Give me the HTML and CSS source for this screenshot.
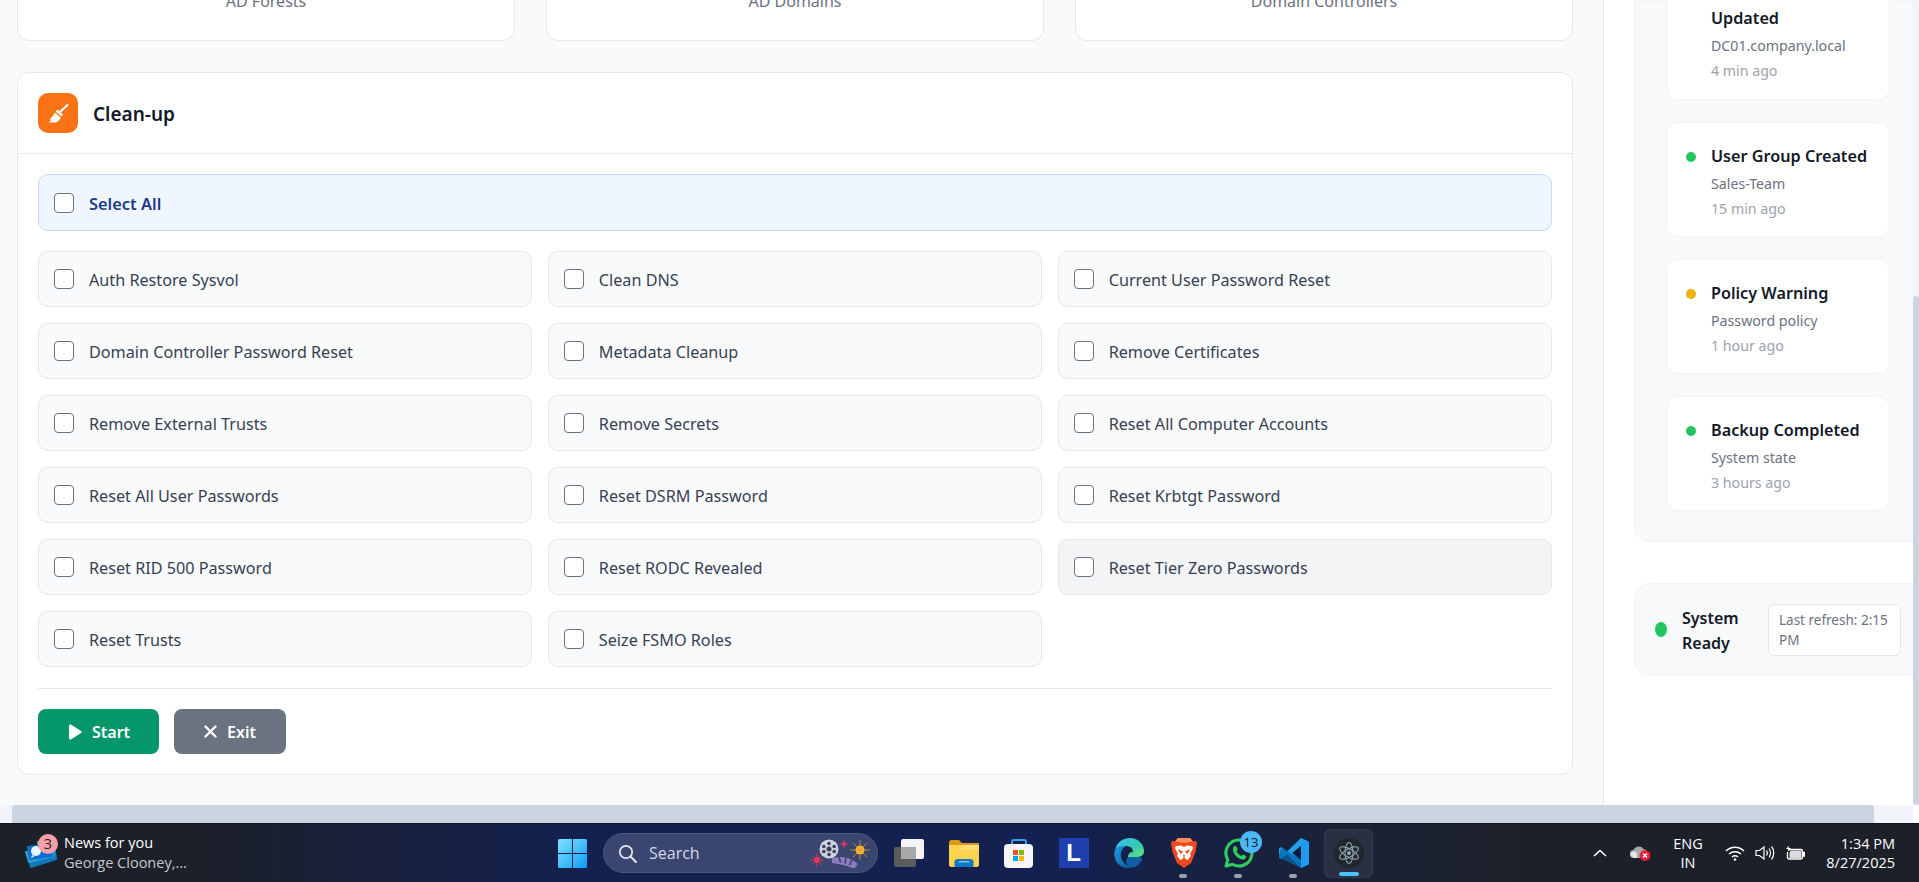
FILE: index.html
```html
<!DOCTYPE html>
<html lang="en">

<head>
    <meta charset="UTF-8">
    <title>AD Recovery</title>
    <link rel="stylesheet" href="styles.css">
</head>

<body>

    <section class="window">

        <div class="viewport">

            <main class="main">

                <div class="stats">
                    <div class="stat-card">AD Forests</div>
                    <div class="stat-card">AD Domains</div>
                    <div class="stat-card">Domain Controllers</div>
                </div>

                <div class="panel">

                    <div class="panel-head">
                        <span class="panel-icon">
                            <svg viewBox="0 0 21 19" width="21" height="19">
                                <path d="M12.5 7.5L19.5 1" stroke="#fff" stroke-width="2.2" stroke-linecap="round" fill="none"/>
                                <path d="M9.5 5.5L15 10.5L13.5 12.5L7.5 7.5Z" fill="#fff"/>
                                <path d="M6.8 8.5L12.8 13.4C11.5 16.5 9.5 18.2 7.5 18.5L0.5 18.5C2.5 17.5 3 16.5 3 15.5L1.2 15.3C3.5 14 5.5 11.5 6.8 8.5Z" fill="#fff"/>
                            </svg>
                        </span>
                        <h2 class="panel-title">Clean-up</h2>
                    </div>

                    <div class="panel-body">

                        <label class="option option-all"><input type="checkbox"><span>Select All</span></label>

                        <div class="option-grid">
                            <label class="option"><input type="checkbox"><span>Auth Restore Sysvol</span></label>
                            <label class="option"><input type="checkbox"><span>Clean DNS</span></label>
                            <label class="option"><input type="checkbox"><span>Current User Password Reset</span></label>
                            <label class="option"><input type="checkbox"><span>Domain Controller Password Reset</span></label>
                            <label class="option"><input type="checkbox"><span>Metadata Cleanup</span></label>
                            <label class="option"><input type="checkbox"><span>Remove Certificates</span></label>
                            <label class="option"><input type="checkbox"><span>Remove External Trusts</span></label>
                            <label class="option"><input type="checkbox"><span>Remove Secrets</span></label>
                            <label class="option"><input type="checkbox"><span>Reset All Computer Accounts</span></label>
                            <label class="option"><input type="checkbox"><span>Reset All User Passwords</span></label>
                            <label class="option"><input type="checkbox"><span>Reset DSRM Password</span></label>
                            <label class="option"><input type="checkbox"><span>Reset Krbtgt Password</span></label>
                            <label class="option"><input type="checkbox"><span>Reset RID 500 Password</span></label>
                            <label class="option"><input type="checkbox"><span>Reset RODC Revealed</span></label>
                            <label class="option option-hover"><input type="checkbox"><span>Reset Tier Zero Passwords</span></label>
                            <label class="option"><input type="checkbox"><span>Reset Trusts</span></label>
                            <label class="option"><input type="checkbox"><span>Seize FSMO Roles</span></label>
                        </div>

                        <div class="actions">
                            <button class="btn btn-start">
                                <svg viewBox="0 0 14 16" width="14" height="16"><path d="M1 1.6C1 .6 2 .1 2.8.6L13 6.9C13.8 7.4 13.8 8.6 13 9.1L2.8 15.4C2 15.9 1 15.4 1 14.4Z" fill="#fff"/></svg>
                                Start
                            </button>
                            <button class="btn btn-exit">
                                <svg viewBox="0 0 13 13" width="13" height="13"><path d="M1.5 1.5L11.5 11.5M11.5 1.5L1.5 11.5" stroke="#fff" stroke-width="2.4" stroke-linecap="round"/></svg>
                                Exit
                            </button>
                        </div>

                    </div>

                </div>

            </main>

            <aside class="sidebar">

                <div class="activity">
                    <div class="activity-card activity-first">
                        <div class="activity-title">Updated</div>
                        <div class="activity-sub">DC01.company.local</div>
                        <div class="activity-time">4 min ago</div>
                    </div>
                    <div class="activity-card">
                        <i class="dot dot-green"></i>
                        <div class="activity-title">User Group Created</div>
                        <div class="activity-sub">Sales-Team</div>
                        <div class="activity-time">15 min ago</div>
                    </div>
                    <div class="activity-card">
                        <i class="dot dot-amber"></i>
                        <div class="activity-title">Policy Warning</div>
                        <div class="activity-sub">Password policy</div>
                        <div class="activity-time">1 hour ago</div>
                    </div>
                    <div class="activity-card">
                        <i class="dot dot-green"></i>
                        <div class="activity-title">Backup Completed</div>
                        <div class="activity-sub">System state</div>
                        <div class="activity-time">3 hours ago</div>
                    </div>
                </div>

                <div class="status">
                    <i class="status-dot"></i>
                    <strong class="status-text">System Ready</strong>
                    <span class="status-refresh">Last refresh: 2:15 PM</span>
                </div>

            </aside>

            <div class="vscroll"><div class="vscroll-thumb"></div></div>

        </div>

        <div class="hscroll">
            <div class="hscroll-track"><div class="hscroll-thumb"></div></div>
            <div class="hscroll-corner"></div>
        </div>

    </section>

    <footer class="taskbar">

        <div class="news">
            <span class="news-icon">
                <svg viewBox="0 0 34 32" width="34" height="32" stroke-linejoin="round">
                    <path d="M12 4h14v8H12z" fill="#4caf72"/>
                    <path d="M3 20L30 14L31 22L6 30Z" fill="#1477b8" stroke="#1477b8" stroke-width="2"/>
                    <path d="M1 15L28 10L29 19L4 25Z" fill="#2a9fd8" stroke="#2a9fd8" stroke-width="2"/>
                    <path d="M3 10L26 7L27 19L5 22Z" fill="#0f6fd0" stroke="#0f6fd0" stroke-width="2"/>
                    <circle cx="11" cy="14" r="5" fill="#e8f3fb"/>
                    <path d="M7 18l-1 3 4-2z" fill="#e8f3fb"/>
                    <path d="M18 11.5h7M18 15h7" stroke="#cfe8f8" stroke-width="1.6"/>
                </svg>
                <b class="news-badge">3</b>
            </span>
            <div class="news-text">
                <div>News for you</div>
                <div class="news-sub">George Clooney,...</div>
            </div>
        </div>

        <div class="task-center">

            <span class="slot">
                <svg viewBox="0 0 29 29" width="29" height="29">
                    <defs>
                        <linearGradient id="winGrad" x1="0" y1="0" x2="1" y2="1">
                            <stop offset="0" stop-color="#7fe3ff"/>
                            <stop offset="1" stop-color="#0f9bf5"/>
                        </linearGradient>
                    </defs>
                    <path d="M1.5 0H14V14H0V1.5A1.5 1.5 0 0 1 1.5 0ZM15 0H27.5A1.5 1.5 0 0 1 29 1.5V14H15ZM0 15H14V29H1.5A1.5 1.5 0 0 1 0 27.5ZM15 15H29V27.5A1.5 1.5 0 0 1 27.5 29H15Z" fill="url(#winGrad)"/>
                </svg>
            </span>

            <div class="search">
                <svg viewBox="0 0 19 19" width="19" height="19"><circle cx="8" cy="8" r="6.2" stroke="#e4e7f0" stroke-width="1.7" fill="none"/><path d="M12.5 12.5L18 18" stroke="#e4e7f0" stroke-width="1.9" stroke-linecap="round"/></svg>
                <span>Search</span>
                <svg class="search-art" viewBox="0 0 62 30" width="62" height="30">
                    <path d="M24 20C31 18 41 18 50 26L46 31C39 27 31 26 24 25Z" fill="#8a7bc0"/>
                    <path d="M31 18.5l1.5 6M38 19.5l-1 6M44 22l-2.5 5" stroke="#3c3f5c" stroke-width="1.5"/>
                    <circle cx="21" cy="11" r="9.5" fill="#cfd0e0"/>
                    <circle cx="21" cy="11" r="2.5" fill="#3c3f5c"/>
                    <circle cx="21" cy="5.5" r="1.8" fill="#3c3f5c"/><circle cx="21" cy="16.5" r="1.8" fill="#3c3f5c"/>
                    <circle cx="15.8" cy="8.5" r="1.8" fill="#3c3f5c"/><circle cx="26.2" cy="8.5" r="1.8" fill="#3c3f5c"/>
                    <circle cx="15.8" cy="13.5" r="1.8" fill="#3c3f5c"/><circle cx="26.2" cy="13.5" r="1.8" fill="#3c3f5c"/>
                    <circle cx="9" cy="22" r="3" fill="#e8365a"/>
                    <path d="M9 15v14M2 22h14M4 17l10 10M14 17L4 27" stroke="#e8365a" stroke-width=".8"/>
                    <circle cx="36" cy="6" r="2.2" fill="#e8365a"/>
                    <path d="M36 2v8M32 6h8" stroke="#e8365a" stroke-width=".7"/>
                    <circle cx="52" cy="12" r="4.5" fill="#ffb81c"/>
                    <path d="M52 2v20M42 12h20M45 5l14 14M59 5L45 19" stroke="#d99a3a" stroke-width=".8"/>
                </svg>
            </div>

            <span class="slot">
                <svg viewBox="0 0 30 28" width="30" height="28">
                    <rect x="7" y="0" width="23" height="20" rx="2" fill="#f4f4f4"/>
                    <rect x="0" y="8" width="22" height="20" rx="2" fill="#5c5c5c"/>
                    <rect x="7" y="8" width="15" height="12" fill="#a8a8a8"/>
                </svg>
            </span>

            <span class="slot">
                <svg viewBox="0 0 30 27" width="30" height="27">
                    <path d="M0 2.5C0 1 1 0 2.5 0H10L13 3H30V10H0Z" fill="#d99a14"/>
                    <path d="M0 5H30V25C30 26 29 27 28 27H2C1 27 0 26 0 25Z" fill="#ffd24d"/>
                    <path d="M14 5H30V10H9Z" fill="#ffdf73"/>
                    <path d="M5.5 22C5.5 20 7 19 9 19H21C23 19 24.5 20 24.5 22V27H5.5Z" fill="#0f78c4"/>
                    <rect x="10" y="21" width="10" height="1.5" fill="#7cc4ef"/>
                </svg>
            </span>

            <span class="slot">
                <svg viewBox="0 0 30 29" width="30" height="29">
                    <path d="M8 8V3C8 2 9 1 10 1H20C21 1 22 2 22 3V8" stroke="#29a9ea" stroke-width="2" fill="none"/>
                    <rect x="0" y="5" width="29" height="24" rx="4" fill="#f6f6f6"/>
                    <rect x="9" y="11" width="5" height="5" fill="#f25022"/>
                    <rect x="15" y="11" width="5" height="5" fill="#7fba00"/>
                    <rect x="9" y="17" width="5" height="5" fill="#00a4ef"/>
                    <rect x="15" y="17" width="5" height="5" fill="#ffb900"/>
                </svg>
            </span>

            <span class="slot">
                <span class="app-l"><span>L</span></span>
            </span>

            <span class="slot">
                <svg viewBox="0 0 30 30" width="30" height="30">
                    <defs>
                        <linearGradient id="edgeA" x1="0" y1="0" x2="1" y2="1">
                            <stop offset="0" stop-color="#35c1f1"/>
                            <stop offset=".6" stop-color="#36c9b0"/>
                            <stop offset="1" stop-color="#66eb6e"/>
                        </linearGradient>
                        <linearGradient id="edgeB" x1="0" y1="0" x2="1" y2="1">
                            <stop offset="0" stop-color="#1b9de2"/>
                            <stop offset="1" stop-color="#0c59a4"/>
                        </linearGradient>
                    </defs>
                    <path d="M1 12C3 4 9 0 16 0C24 0 30 6 30 13C30 17 27 19 22 19H14C14 16 16 14 19 14C19 10 16 8 12 8C7 8 3 9 1 12Z" fill="url(#edgeA)"/>
                    <path d="M1 12C3 8 7 7 12 8C8 10 6 14 7 19C8 25 14 29 19 29C12 32 3 28 1 20C0 17 0 15 1 12Z" fill="url(#edgeB)"/>
                    <path d="M14 19H22C24 19 27 18 28 20C26 26 22 30 17 29C13 28 10 23 14 19Z" fill="#125fa8"/>
                    <path d="M28.5 21C27 26 23 29 19 29.5C22 28 25 25 27 21Z" fill="#0f4e94"/>
                </svg>
            </span>

            <span class="slot">
                <svg viewBox="0 0 26 30" width="26" height="30">
                    <path d="M7 0H19L22 3.5L25 3L26 5L24.5 14L20 25L13 30L6 25L1.5 14L0 5L1 3L4 3.5Z" fill="#f1471d"/>
                    <path d="M7 0H19L22 3.5L13 5L4 3.5Z" fill="#ff8c5a"/>
                    <path d="M5 8L10 7.5L13 9L16 7.5L21 8L22 10L19 16L20 18L16.5 22L13 20L9.5 22L6 18L7 16L4 10Z" fill="#fff"/>
                    <path d="M8 12.5L11 13.5L10 15ZM18 12.5L15 13.5L16 15ZM13 16.5V21" stroke="#f1471d" stroke-width="1.2" fill="#f1471d"/>
                </svg>
                <i class="run-dot"></i>
            </span>

            <span class="slot">
                <svg viewBox="0 0 30 30" width="30" height="30">
                    <path d="M15 2A13 13 0 1 1 8.5 26.3L2 28L3.8 21.7A13 13 0 0 1 15 2Z" fill="none" stroke="#2fd05f" stroke-width="3" stroke-linejoin="round"/>
                    <path d="M10.5 8C9 9 8.5 11 9.5 14C11 18 14 20.5 18 21.5C20 22 21.5 21 22 19.5L22 18L19 16.5L17.5 18C15.5 17.5 13 15 12.5 13L13.8 11.5L12.3 8.2Z" fill="#2fd05f"/>
                </svg>
                <b class="app-badge">13</b>
                <i class="run-dot"></i>
            </span>

            <span class="slot">
                <svg viewBox="0 0 30 30" width="30" height="30">
                    <path d="M22 0L30 4V26L22 30L8 16.5L2.5 21L0 19.5V10.5L2.5 9L8 13.5ZM22 8L13.5 15L22 22Z" fill="#24a0ed"/>
                    <path d="M22 0L30 4V26L22 30Z" fill="#1f9cf0"/>
                    <path d="M2.5 9L22 22V30L0 19.5V17Z" fill="#0065a9" opacity=".75"/>
                    <path d="M22 8L13.5 15L22 22Z" fill="#141c3c"/>
                </svg>
                <i class="run-dot"></i>
            </span>

            <span class="slot slot-active">
                <span class="app-electron">
                    <svg viewBox="0 0 24 24" width="24" height="24" fill="none" stroke="#8fa3ad" stroke-width="1.1">
                        <ellipse cx="12" cy="12" rx="10.5" ry="4" transform="rotate(30 12 12)"/>
                        <ellipse cx="12" cy="12" rx="10.5" ry="4" transform="rotate(-30 12 12)"/>
                        <ellipse cx="12" cy="12" rx="10.5" ry="4" transform="rotate(90 12 12)"/>
                        <circle cx="12" cy="12" r="1.5" fill="#8fa3ad"/>
                    </svg>
                </span>
                <i class="run-bar"></i>
            </span>

        </div>

        <div class="tray">

            <svg class="tray-chevron" viewBox="0 0 14 8" width="14" height="8"><path d="M1 7L7 1.5L13 7" stroke="#fff" stroke-width="1.6" fill="none"/></svg>

            <span class="tray-cloud">
                <svg viewBox="0 0 21 16" width="21" height="16">
                    <path d="M4 13A4 4 0 0 1 3.5 5C5 1 11 0 13.5 4C15.5 4 17 5.5 17 7V13Z" fill="#a8a8a8"/>
                    <path d="M1 11A3 3 0 0 1 4 6.5C6 6.5 7.5 8.5 7 13H4Z" fill="#e6e6e6"/>
                    <circle cx="15" cy="10.5" r="5.4" fill="#e81e3c"/>
                    <path d="M13 8.5L17 12.5M17 8.5L13 12.5" stroke="#fff" stroke-width="1.4"/>
                </svg>
            </span>

            <div class="tray-lang">ENG<br>IN</div>

            <div class="tray-icons">
                <svg viewBox="0 0 20 16" width="20" height="16" fill="none" stroke="#fff" stroke-width="1.5">
                    <path d="M1 6C6 1 14 1 19 6M4 9C7.5 6 12.5 6 16 9M7 12C8.7 10.7 11.3 10.7 13 12"/>
                    <circle cx="10" cy="14.5" r="1.3" fill="#fff" stroke="none"/>
                </svg>
                <svg viewBox="0 0 20 16" width="20" height="16" fill="none" stroke="#fff" stroke-width="1.2">
                    <path d="M1 5.5H4.5L9 2V14L4.5 10.5H1Z"/>
                    <path d="M11.5 5.5C12.5 7 12.5 9 11.5 10.5M14 3.5C16 6 16 10 14 12.5M16.5 1.5C19.5 5 19.5 11 16.5 14.5"/>
                </svg>
                <svg viewBox="0 0 20 16" width="20" height="16" fill="none" stroke="#fff" stroke-width="1.3">
                    <path d="M3 4.5H16C17 4.5 17.5 5 17.5 6V12.5C17.5 13.500 17 14 16 14H4C3 14 2.5 13.5 2.5 12.5V7"/>
                    <path d="M18 7.5H19.5V11H18" fill="#fff"/>
                    <path d="M5.5 5.5H16.5V13H4.5V8Z" fill="#dcdcdc" stroke="none"/>
                    <path d="M4 0.5L1 4H3.5L2.5 7L6 3H3.5Z" fill="#fff" stroke="none"/>
                </svg>
            </div>

            <div class="tray-clock">1:34 PM<br>8/27/2025</div>

        </div>

    </footer>

</body>

</html>
```

FILE: styles.css
```css
* {
    box-sizing: border-box;
}

html, body {
    height: 100%;
}

body {
    margin: 0;
    overflow: hidden;
    font-family: "Noto Sans", "Liberation Sans", sans-serif;
    font-size: 16px;
    color: #111827;
    background: #fff;
}

.window {
    height: 823px;
    display: flex;
    flex-direction: column;
}

.viewport {
    height: 805px;
    display: flex;
    overflow: hidden;
}

/* main column */

.main {
    width: 1604px;
    flex: none;
    height: 805px;
    padding: 0 30px 0 17px;
    background: #f8fafc;
    border-right: 1px solid #e5e7eb;
    overflow: hidden;
}

.stats {
    display: grid;
    grid-template-columns: repeat(3, 1fr);
    gap: 31px;
    margin-top: -60px;
}

.stat-card {
    height: 101px;
    padding-top: 49px;
    text-align: center;
    color: #6b7280;
    background: #fff;
    border: 1px solid #e5e7eb;
    border-radius: 12px;
}

.panel {
    margin-top: 31px;
    height: 703px;
    background: #fff;
    border: 1px solid #e5e7eb;
    border-radius: 12px;
}

.panel-head {
    display: flex;
    align-items: center;
    gap: 15px;
    height: 81px;
    padding: 0 20px;
    border-bottom: 1px solid #e5e7eb;
}

.panel-icon {
    width: 40px;
    height: 40px;
    display: flex;
    align-items: center;
    justify-content: center;
    background: #f97316;
    border-radius: 10px;
}

.panel-title {
    margin: 2px 0 0;
    font-size: 19px;
    font-weight: 600;
}

.panel-body {
    padding: 20px;
}

.option {
    display: flex;
    align-items: center;
    gap: 15px;
    height: 56px;
    padding: 0 15px;
    font-size: 16.2px;
    color: #374151;
    background: #f9fafb;
    border: 1px solid #e5e7eb;
    border-radius: 10px;
}

.option span {
    padding-top: 2px;
}

.option input {
    appearance: none;
    width: 20px;
    height: 20px;
    margin: 0;
    flex: none;
    background: #fff;
    border: 1.5px solid #6b7280;
    border-radius: 4px;
}

.option-all {
    height: 57px;
    margin-bottom: 20px;
    color: #1e3a8a;
    font-size: 16.4px;
    font-weight: 600;
    background: #eff6ff;
    border-color: #bfdbfe;
}

.option-hover {
    background: #f3f4f6;
}

.option-grid {
    display: grid;
    grid-template-columns: repeat(3, 1fr);
    gap: 16px 15.5px;
}

.actions {
    display: flex;
    gap: 15px;
    margin-top: 21px;
    padding-top: 20px;
    border-top: 1px solid #e5e7eb;
}

.btn {
    display: flex;
    align-items: center;
    gap: 10px;
    height: 45px;
    padding: 0 30px;
    color: #fff;
    font: 600 16px "Noto Sans", sans-serif;
    border: 0;
    border-radius: 8px;
}

.btn-start {
    padding-right: 29px;
    background: #059669;
}

.btn-exit {
    background: #6b7280;
}

/* right column */

.sidebar {
    width: 309px;
    flex: none;
    padding-left: 30px;
    background: #fff;
    overflow: hidden;
}

.activity {
    width: 320px;
    height: 542px;
    display: flex;
    flex-direction: column;
    justify-content: flex-end;
    gap: 22px;
    padding: 0 0 30px 31px;
    background: #f8f9fb;
    border: 1px solid #f1f3f6;
    border-radius: 0 0 16px 16px;
}

.activity-card {
    position: relative;
    width: 224px;
    height: 115px;
    flex: none;
    padding: 21px 0 0 44px;
    background: #fff;
    border: 1px solid #f1f3f6;
    border-radius: 12px;
}

.activity-first {
    height: 100px;
    padding-top: 6px;
    border-top: 0;
    border-radius: 0 0 12px 12px;
}

.dot {
    position: absolute;
    left: 19px;
    top: 29px;
    width: 10px;
    height: 10px;
    border-radius: 50%;
}

.dot-green {
    background: #22c55e;
}

.dot-amber {
    background: #eab308;
}

.activity-title {
    font-size: 16.2px;
    line-height: 24px;
    font-weight: 600;
    white-space: nowrap;
}

.activity-sub {
    margin-top: 5px;
    font-size: 14.2px;
    line-height: 22px;
    color: #6b7280;
}

.activity-time {
    margin-top: 3px;
    font-size: 14.2px;
    line-height: 22px;
    color: #9ca3af;
}

.status {
    width: 320px;
    height: 93px;
    margin-top: 41px;
    display: flex;
    align-items: center;
    padding-left: 20px;
    background: #f8f9fb;
    border: 1px solid #f1f3f6;
    border-radius: 16px;
}

.status-dot {
    width: 12px;
    height: 15px;
    flex: none;
    background: #22c55e;
    border-radius: 50%;
}

.status-text {
    width: 86px;
    flex: none;
    margin-left: 15px;
    padding-top: 2px;
    font-size: 16px;
    line-height: 25px;
    font-weight: 600;
}

.status-refresh {
    width: 133px;
    flex: none;
    padding: 5px 3px 5px 10px;
    font-size: 13.5px;
    line-height: 20px;
    color: #6b7280;
    background: #fff;
    border: 1px solid #e5e7eb;
    border-radius: 6px;
}

/* fake scrollbars */

.vscroll {
    width: 6px;
    flex: none;
    padding-top: 296px;
    background: #f1f5f9;
}

.vscroll-thumb {
    height: 509px;
    background: #cbd5e1;
    border-radius: 3px;
}

.hscroll {
    height: 18px;
    display: flex;
}

.hscroll-track {
    flex: 1;
    padding-left: 12px;
    background: #f1f5f9;
}

.hscroll-thumb {
    width: 1862px;
    height: 18px;
    background: #cbd5e1;
    border-radius: 3px 3px 0 0;
}

.hscroll-corner {
    width: 6px;
    background: #fff;
}

/* windows taskbar */

.taskbar {
    height: 59px;
    display: flex;
    align-items: center;
    color: #fff;
    font-family: "Open Sans", "Noto Sans", sans-serif;
    font-size: 14.5px;
    background: linear-gradient(90deg, #1c2029 0%, #1c2029 10%, #14204f 30%, #14204f 55%, #1b2233 72%, #1c2029 80%, #1c2029 100%);
    border-top: 1px solid #11151f;
}

.news {
    width: 545px;
    flex: none;
    display: flex;
    align-items: center;
    gap: 6px;
    padding-left: 25px;
}

.news-icon {
    position: relative;
    width: 33px;
    height: 32px;
}

.news-badge {
    position: absolute;
    left: 13px;
    top: -3px;
    width: 20px;
    height: 20px;
    font-weight: 400;
    line-height: 20px;
    text-align: center;
    color: #1c2029;
    background: #f7a0a8;
    border-radius: 50%;
}

.news-text {
    line-height: 20px;
    white-space: nowrap;
}

.news-sub {
    color: #c5c8ce;
}

.task-center {
    display: flex;
    align-items: center;
}

.slot {
    position: relative;
    width: 55px;
    height: 49px;
    flex: none;
    display: flex;
    align-items: center;
    justify-content: center;
}

.search {
    width: 275px;
    height: 40px;
    margin: 0 3px;
    flex: none;
    display: flex;
    align-items: center;
    gap: 12px;
    padding-left: 14px;
    font-size: 16px;
    color: #d5d9e6;
    background: #3a4570;
    border: 1px solid #4c5680;
    border-radius: 20px;
}

.search-art {
    margin-left: auto;
    margin-right: 7px;
}

.app-l {
    width: 30px;
    height: 30px;
    display: flex;
    align-items: center;
    justify-content: center;
    font-family: "Liberation Sans", sans-serif;
    font-size: 24px;
    font-weight: 700;
    color: #fff;
    background: #1e40af;
}

.app-badge {
    position: absolute;
    left: 29px;
    top: 2px;
    width: 22px;
    height: 22px;
    font-size: 13px;
    font-weight: 400;
    line-height: 22px;
    text-align: center;
    color: #10182c;
    background: #4db8f5;
    border-radius: 50%;
}

.run-dot {
    position: absolute;
    left: 23px;
    bottom: 0;
    width: 8px;
    height: 4px;
    background: #9aa0ac;
    border-radius: 2px;
}

.slot-active {
    width: 49px;
    margin-left: 3px;
    background: #2a3044;
    border: 1px solid #333a50;
    border-radius: 6px;
}

.app-electron {
    width: 30px;
    height: 30px;
    display: flex;
    align-items: center;
    justify-content: center;
    background: #23262f;
    border-radius: 50%;
}

.run-bar {
    position: absolute;
    left: 14px;
    bottom: 1px;
    width: 20px;
    height: 4px;
    background: #4cc2ff;
    border-radius: 2px;
}

.tray {
    flex: 1;
    display: flex;
    align-items: center;
    padding-right: 24px;
}

.tray-chevron {
    margin-left: 220px;
}

.tray-cloud {
    margin-left: 23px;
    height: 16px;
}

.tray-lang {
    width: 30px;
    margin-left: 22px;
    line-height: 19px;
    text-align: center;
}

.tray-icons {
    display: flex;
    gap: 10px;
    margin-left: 22px;
}

.tray-clock {
    margin-left: auto;
    line-height: 19px;
    text-align: right;
}
```
